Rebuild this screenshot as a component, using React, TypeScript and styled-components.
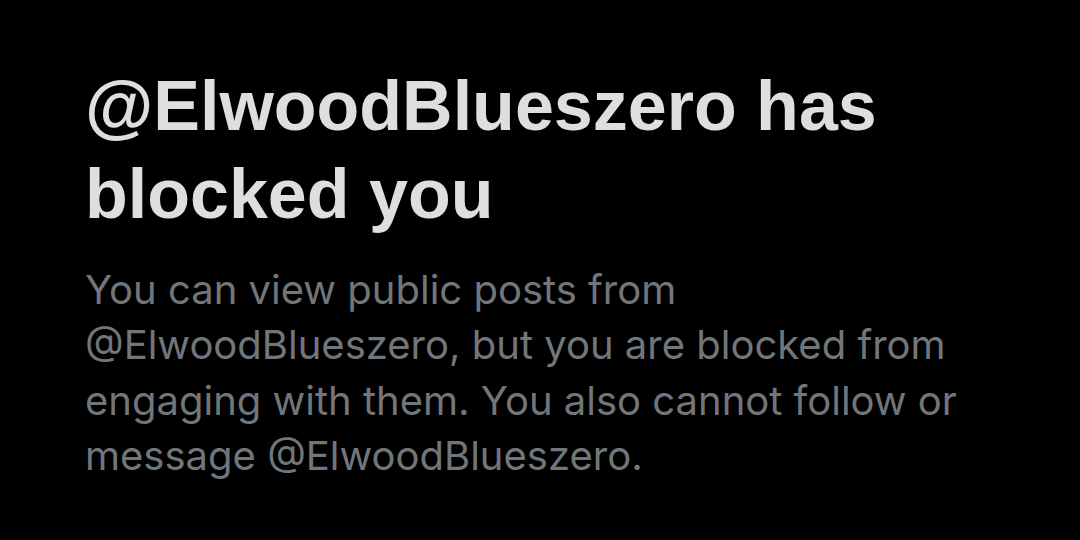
import React from "react";
import styled, { createGlobalStyle } from "styled-components";

const Global = createGlobalStyle`
  html, body { margin: 0; padding: 0; background: #000; }
  body { width: 1080px; height: 540px; overflow: hidden; }
`;

const Page = styled.main`
  width: 1080px;
  height: 540px;
  box-sizing: border-box;
  background: #000;
  padding: 62px 60px 0 85px;
  display: flex;
  flex-direction: column;
  gap: 24px;
`;

const Title = styled.h1`
  margin: 0;
  font-family: "Liberation Sans", Arial, sans-serif;
  font-weight: 700;
  font-size: 70px;
  line-height: 88px;
  color: #dedede;
  max-width: 820px;
`;

const Body = styled.p`
  margin: 0;
  font-family: Inter, "Noto Sans", sans-serif;
  font-weight: 400;
  font-size: 40px;
  line-height: 55.3px;
  color: #71767b;
  max-width: 900px;
`;

export default function App() {
  return (
    <>
      <Global />
      <Page>
        <Title>@ElwoodBlueszero has blocked you</Title>
        <Body>
          You can view public posts from @ElwoodBlueszero, but you are blocked from
          engaging with them. You also cannot follow or message @ElwoodBlueszero.
        </Body>
      </Page>
    </>
  );
}
